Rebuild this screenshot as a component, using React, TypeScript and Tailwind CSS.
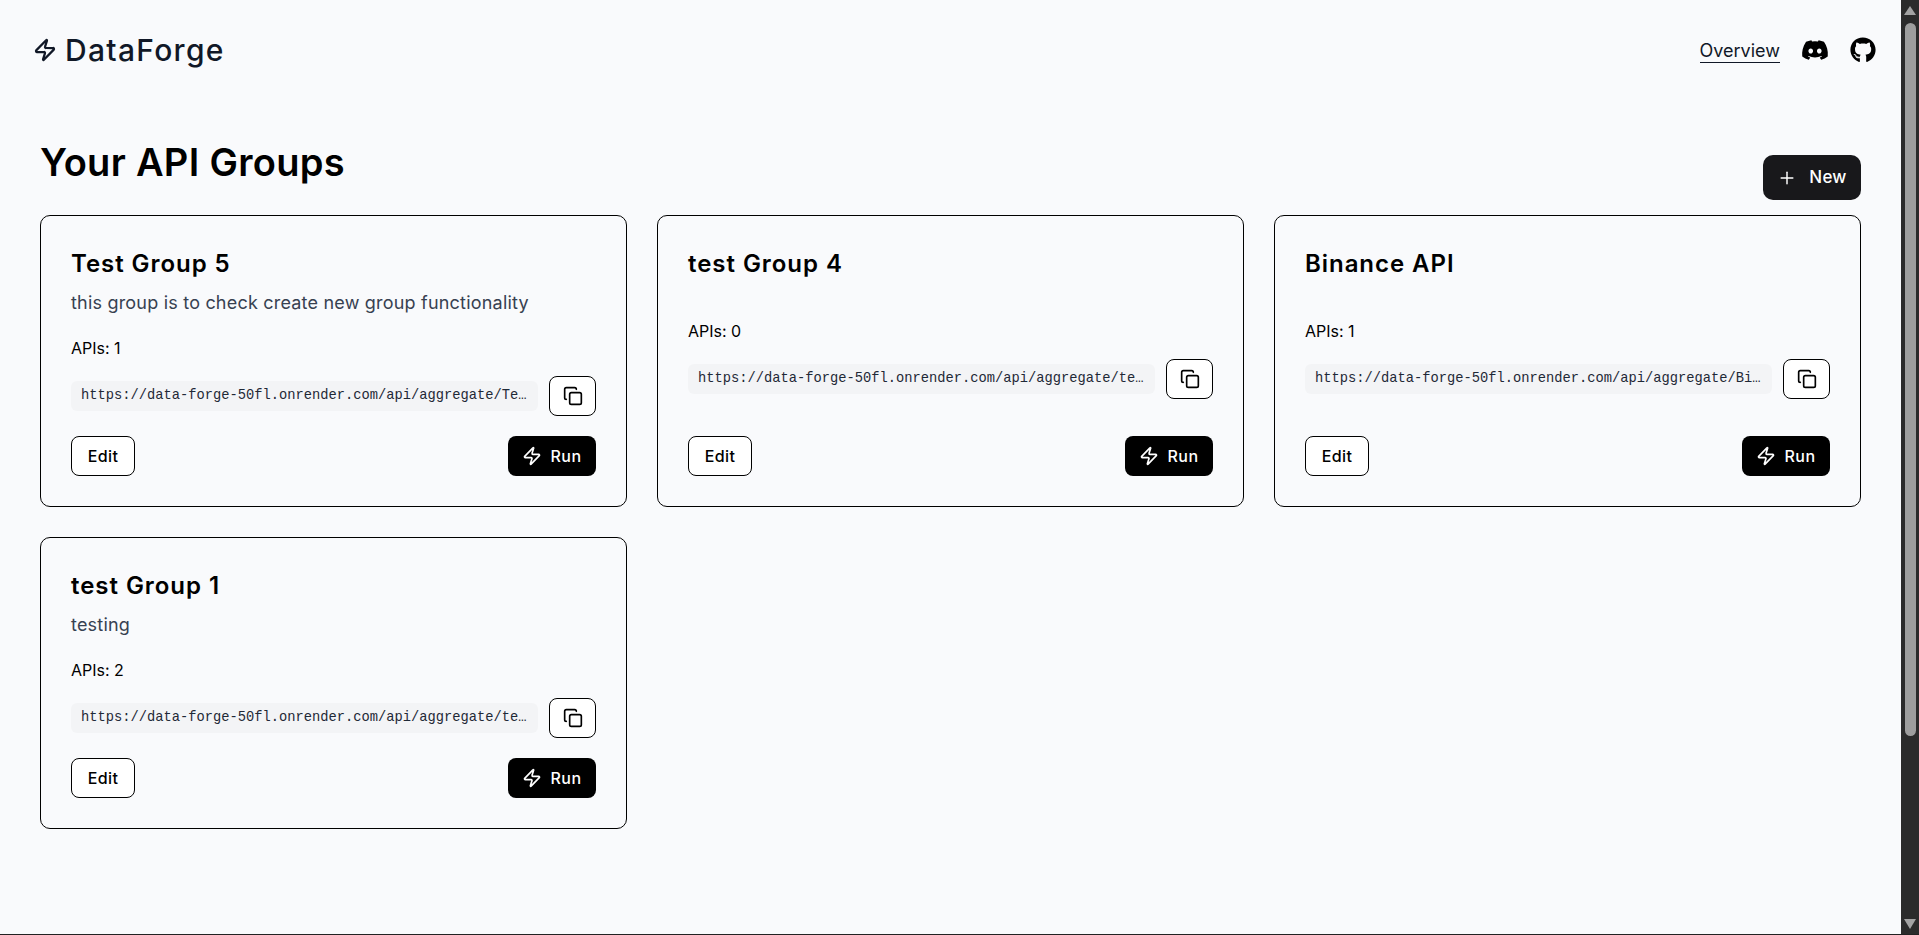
import { Copy, Plus, Zap } from 'lucide-react';
import { FaDiscord, FaGithub } from 'react-icons/fa';

const base = 'https://data-forge-50fl.onrender.com/api/aggregate/';

const groups = [
  { name: 'Test Group 5', description: 'this group is to check create new group functionality', apis: 1, slug: 'Te…' },
  { name: 'test Group 4', description: '', apis: 0, slug: 'te…' },
  { name: 'Binance API', description: '', apis: 1, slug: 'Bi…' },
  { name: 'test Group 1', description: 'testing', apis: 2, slug: 'te…' },
];

function GroupCard({ name, description, apis, slug }: (typeof groups)[number]) {
  return (
    <div className="flex flex-col h-[292px] rounded-[10px] border border-black px-[30px] pt-[30px] pb-[30px]">
      <div>
        <h2 className="text-[24px] leading-[36px] font-semibold text-black tracking-[0.95px]">{name}</h2>
        {description && <p className="mt-[7px] text-[18px] leading-[27px] text-[#374151] tracking-[0.2px]">{description}</p>}
      </div>
      <div className="flex-1 flex flex-col justify-center">
        <div className="text-[16px] leading-[24px] text-black">APIs: {apis}</div>
        <div className="flex items-center gap-[11px] mt-[16px]">
          <code className="flex-1 min-w-0 whitespace-nowrap h-[30px] leading-[30px] px-[10px] rounded-[6px] bg-[#f3f4f6] text-[13.75px] text-[#1f2937] font-['Liberation_Mono',monospace]">
            {base + slug}
          </code>
          <button className="w-[47px] h-[40px] shrink-0 flex items-center justify-center rounded-[8px] border border-black bg-white">
            <Copy size={20} strokeWidth={2} className="text-black" />
          </button>
        </div>
      </div>
      <div className="flex items-center justify-between">
        <button className="w-[64px] h-[40px] rounded-[8px] border border-black bg-white text-[16px] font-medium text-black tracking-[0.4px]">
          Edit
        </button>
        <button className="w-[88px] h-[40px] flex items-center justify-center gap-[8px] rounded-[8px] bg-black text-[16px] font-medium text-white tracking-[0.5px]">
          <Zap size={20} strokeWidth={2} />
          Run
        </button>
      </div>
    </div>
  );
}

function Scrollbar() {
  return (
    <div className="w-[18px] shrink-0 flex flex-col items-center bg-[#2b2b2b]">
      <svg width="12" height="9" viewBox="0 0 12 9" className="mt-[6px] fill-[#a3a3a3]">
        <path d="M6 0 L12 9 L0 9 Z" />
      </svg>
      <div className="w-[11px] h-[713px] mt-[8px] rounded-full bg-[#9e9e9e]" />
      <svg width="12" height="10" viewBox="0 0 12 10" className="mt-auto mb-[5px] fill-[#a3a3a3]">
        <path d="M0 0 L12 0 L6 10 Z" />
      </svg>
    </div>
  );
}

export default function App() {
  return (
    <div className="flex h-[935px] overflow-hidden border-b border-[#222] bg-[#f9fafc] font-['Inter',sans-serif]">
      <div className="flex-1 min-w-0">
        <header className="flex items-center justify-between h-[100px] pl-[33px] pr-[25px]">
          <div className="flex items-center gap-[8px] text-[#111827]">
            <Zap size={24} strokeWidth={2.25} />
            <span className="text-[30px] leading-[36px] font-[450] tracking-[1.3px]">DataForge</span>
          </div>
          <nav className="flex items-center gap-[21px]">
            <a className="text-[18px] leading-[22px] pt-[3px] text-[#111827] border-b border-[#111827]">Overview</a>
            <FaDiscord size={28} className="text-black" />
            <FaGithub size={26} className="text-black" />
          </nav>
        </header>
        <main className="px-[40px]">
          <div className="flex items-end justify-between mt-[40px] mb-[15px] h-[60px]">
            <h1 className="text-[38px] leading-[48px] -mt-[2px] font-semibold text-black self-start tracking-[0.3px]">Your API Groups</h1>
            <button className="w-[98px] h-[45px] flex items-center justify-center gap-[12px] rounded-[10px] bg-[#18181b] text-[17px] font-medium text-white tracking-[0.2px]">
              <Plus size={20} strokeWidth={1.75} />
              New
            </button>
          </div>
          <div className="grid grid-cols-3 gap-[30px]">
            {groups.map((g) => (
              <GroupCard key={g.name} {...g} />
            ))}
          </div>
        </main>
      </div>
      <Scrollbar />
    </div>
  );
}
